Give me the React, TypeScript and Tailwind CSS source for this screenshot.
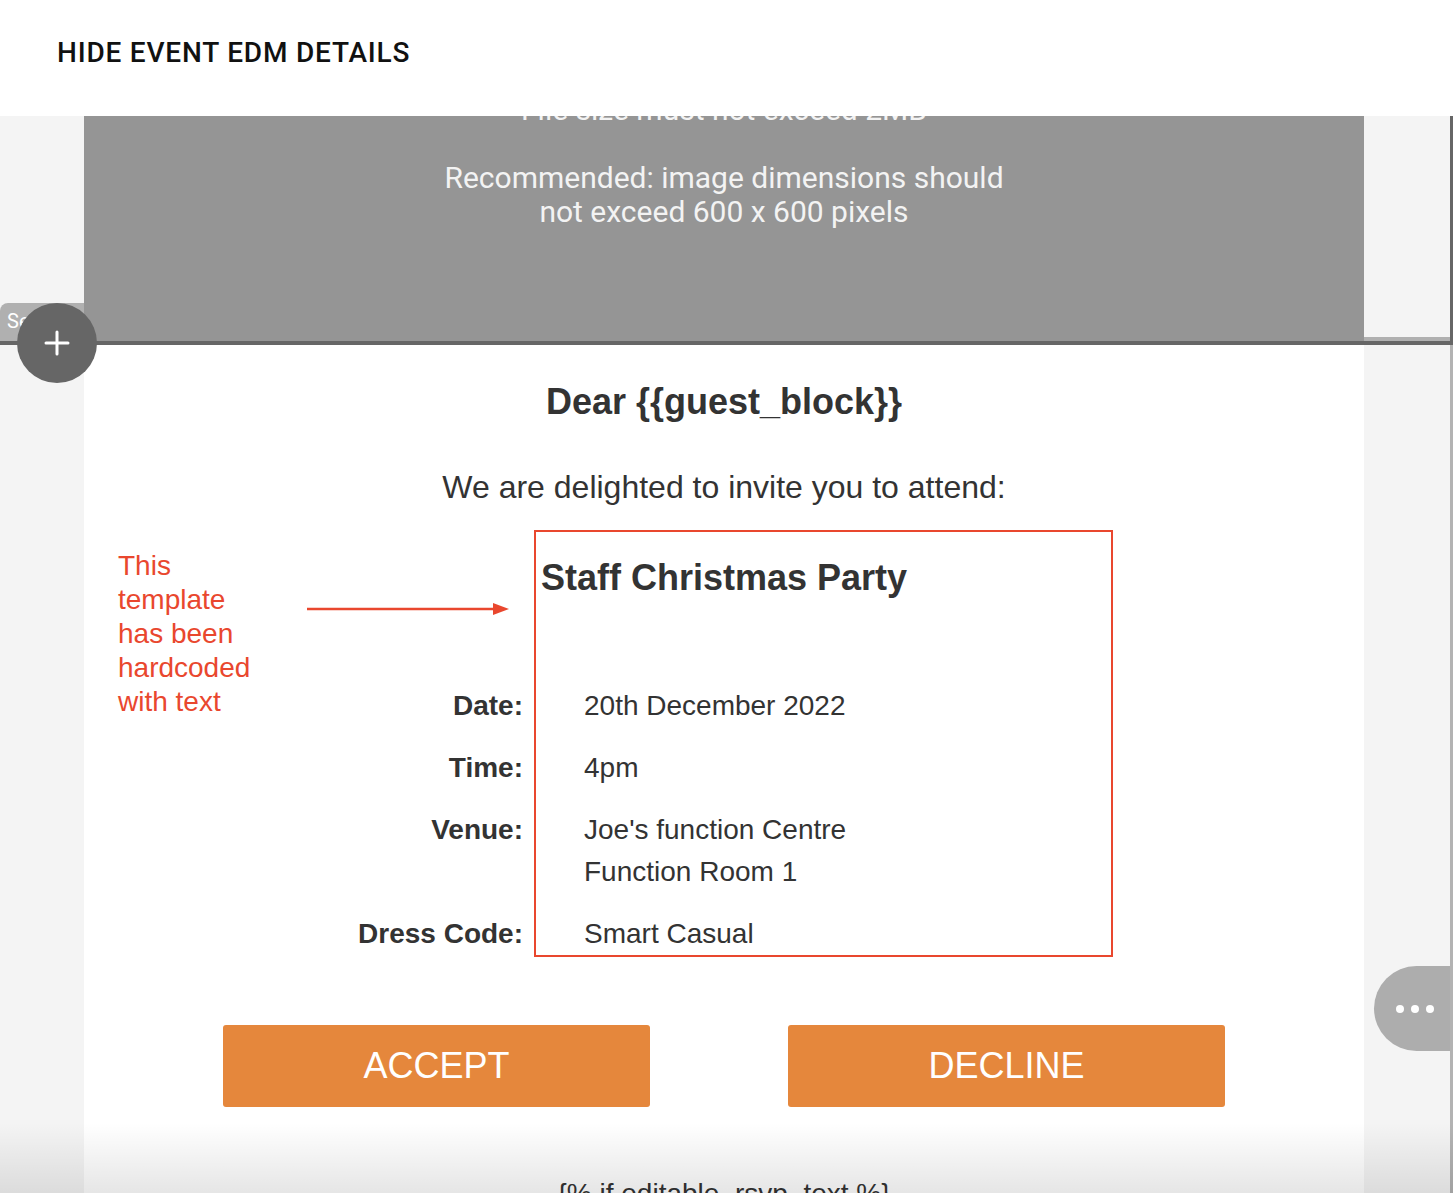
const details = [
  { label: "Date:", lines: ["20th December 2022"] },
  { label: "Time:", lines: ["4pm"] },
  { label: "Venue:", lines: ["Joe's function Centre", "Function Room 1"] },
  { label: "Dress Code:", lines: ["Smart Casual"] },
];

function AddButton() {
  return (
    <>
      {/* section tab peeking behind the add button */}
      <div className="absolute left-0 top-[303px] h-[38px] w-[84px] rounded-tl-[8px] bg-[#b0b0b0] pl-[7px] pt-[6px] font-['Roboto',sans-serif] text-[20px] leading-[24px] text-white">
        Section
      </div>
      <button className="absolute left-[17px] top-[303px] flex h-[80px] w-[80px] items-center justify-center rounded-full bg-[#666]">
        <svg width="26" height="26" viewBox="0 0 26 26" fill="none">
          <path d="M13 2v22M2 13h22" stroke="white" strokeWidth="3" strokeLinecap="round" />
        </svg>
      </button>
    </>
  );
}

function MoreButton() {
  return (
    <button className="absolute left-[1374px] top-[966px] flex h-[85px] w-[76px] items-center gap-[7px] rounded-l-full bg-[#adadad] pl-[22px]">
      <span className="h-[8px] w-[8px] rounded-full bg-white" />
      <span className="h-[8px] w-[8px] rounded-full bg-white" />
      <span className="h-[8px] w-[8px] rounded-full bg-white" />
    </button>
  );
}

function Annotation() {
  return (
    <>
      <div className="absolute left-[118px] top-[549px] font-['Liberation_Sans',Arial,sans-serif] text-[28px] leading-[34px] text-[#e9472e]">
        This
        <br />
        template
        <br />
        has been
        <br />
        hardcoded
        <br />
        with text
      </div>
      <svg className="absolute left-[305px] top-[600px]" width="210" height="18" viewBox="0 0 210 18">
        <path d="M2 9h190" stroke="#e9472e" strokeWidth="2.5" />
        <path d="M188 3l16 6-16 6z" fill="#e9472e" />
      </svg>
      <div className="absolute left-[534px] top-[530px] h-[427px] w-[579px] border-2 border-[#e9472e]" />
    </>
  );
}

export default function App() {
  return (
    <div className="relative h-[1193px] overflow-hidden bg-[#f4f4f4] font-['Liberation_Sans',Arial,sans-serif] text-[#333]">
      {/* Top bar */}
      <header className="flex h-[116px] items-center bg-white pb-[10px] pl-[57px]">
        <h1 className="font-['Roboto',sans-serif] text-[28px] font-medium tracking-[0.8px] text-[#111]">
          HIDE EVENT EDM DETAILS
        </h1>
      </header>

      {/* Image placeholder block */}
      <div className="flex h-[225px]">
        <div className="w-[84px]" />
        <div className="w-[1280px] overflow-hidden bg-[#959595]">
          <div className="flex flex-col items-center font-['Roboto',sans-serif] text-[30px] leading-[34px] text-[#f3f3f3]">
            <p className="mt-[-23px]">File size must not exceed 2MB</p>
            <p className="h-[34px]" />
            <p>Recommended: image dimensions should</p>
            <p>not exceed 600 x 600 pixels</p>
          </div>
        </div>
        <div className="flex flex-1 flex-col justify-end border-r-[3px] border-[#666]">
          <div className="h-[4px] bg-[#b0b0b0]" />
        </div>
      </div>
      <div className="h-[4px] bg-[#666]" />

      {/* Email body */}
      <div className="flex">
        <div className="w-[84px]" />
        <main className="flex w-[1280px] flex-col bg-white pb-[40px]">
          <h2 className="mt-[36px] text-center text-[36px] font-bold leading-[42px]">Dear {"{{guest_block}}"}</h2>
          <p className="mt-[46px] text-center text-[32px] leading-[36px]">We are delighted to invite you to attend:</p>

          <div className="mt-[53px] grid grid-cols-[438px_1fr]">
            <div />
            <h3 className="pl-[19px] text-[36px] font-bold leading-[40px]">Staff Christmas Party</h3>
            <div className="col-span-2 h-[87px]" />
            {details.map((d) => (
              <div key={d.label} className="col-span-2 mb-[20px] grid grid-cols-[439px_1fr]">
                <span className="text-right text-[28px] font-bold leading-[42px]">{d.label}</span>
                <div className="pl-[61px] text-[28px] leading-[42px]">
                  {d.lines.map((l) => (
                    <div key={l}>{l}</div>
                  ))}
                </div>
              </div>
            ))}
          </div>

          <div className="mt-[50px] flex justify-between px-[139px]">
            <button className="h-[82px] w-[427px] rounded-[3px] bg-[#e5873c] text-[36px] text-white">ACCEPT</button>
            <button className="h-[82px] w-[437px] rounded-[3px] bg-[#e5873c] text-[36px] text-white">DECLINE</button>
          </div>

          <p className="mt-[70px] text-center text-[28px] leading-[34px]">{"{% if editable_rsvp_text %}"}</p>
        </main>
        <div className="flex-1 border-r-[3px] border-[#b3b3b3]" />
      </div>

      <AddButton />
      <MoreButton />
      <Annotation />

      {/* bottom fade */}
      <div className="pointer-events-none absolute bottom-0 left-0 h-[70px] w-full bg-gradient-to-b from-transparent to-black/10" />
    </div>
  );
}
